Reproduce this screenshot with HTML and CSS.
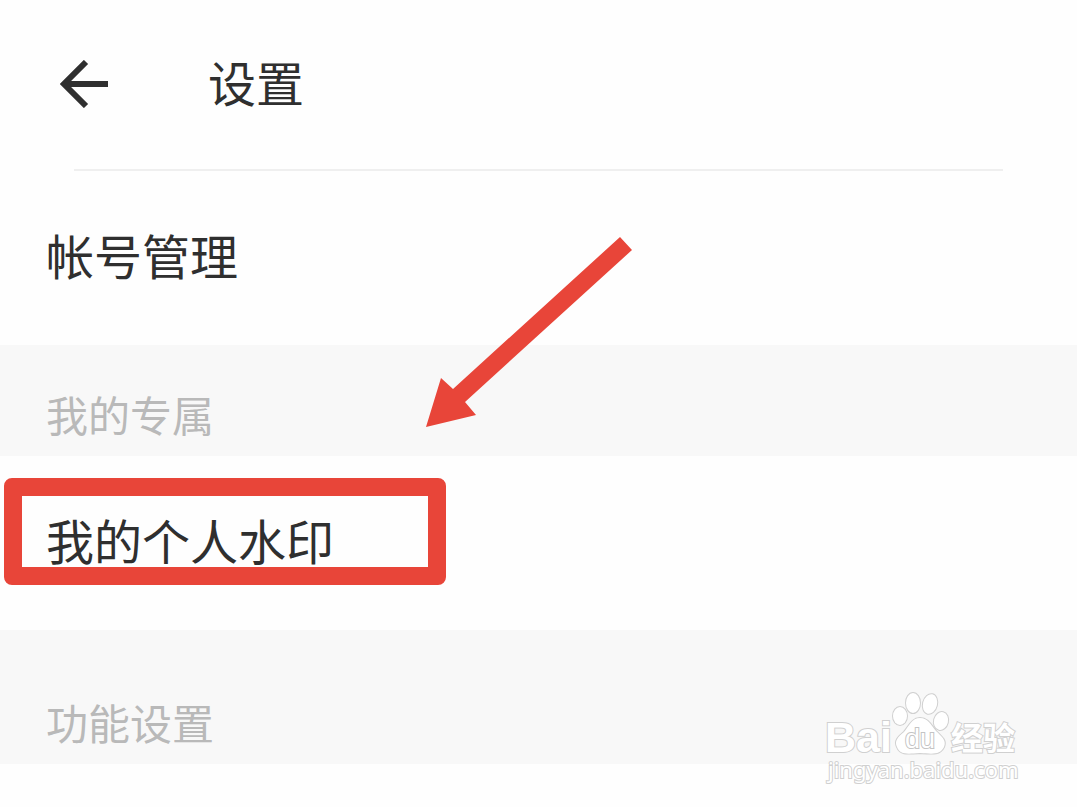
FILE: index.html
```html
<!DOCTYPE html>
<html lang="zh-CN">
<head>
    <meta charset="UTF-8">
    <meta name="viewport" content="width=device-width, initial-scale=1.0">
    <title>设置</title>
    <link rel="stylesheet" href="styles.css">
</head>
<body>
    <div class="page">
        <header class="header">
            <button class="btn-back" type="button" aria-label="返回">
                <svg class="icon-back" viewBox="0 0 48 48" aria-hidden="true">
                    <path d="M48 24H5M26 2L4 24L26 46" fill="none" stroke="#2f2f2f" stroke-width="6"/>
                </svg>
            </button>
            <h1 class="title">设置</h1>
        </header>

        <main class="settings">
            <a class="setting-row" href="#account">帐号管理</a>
            <h2 class="section-title">我的专属</h2>
            <a class="setting-row" href="#watermark">
                <span class="highlight"></span>
                <span class="row-label">我的个人水印</span>
            </a>
            <h2 class="section-title section-title-tall">功能设置</h2>
        </main>

        <!-- Arrow pointing at the highlighted row -->
        <svg class="arrow" viewBox="0 0 206 191" aria-hidden="true">
            <path d="M194 0L206 13L39 165L50 178L0 190L15 141L27 152Z" fill="#e84539"/>
        </svg>

        <!-- Site logo -->
        <svg class="logo" viewBox="0 0 210 110" role="img" aria-label="Baidu 经验">
            <g class="logo-shape">
                <text class="logo-name" x="3" y="60">Bai</text>
                <ellipse cx="78" cy="24" rx="7" ry="9"/>
                <ellipse cx="91" cy="11" rx="7" ry="10"/>
                <ellipse cx="108" cy="12" rx="7" ry="10" transform="rotate(14 108 12)"/>
                <ellipse cx="119" cy="29" rx="7" ry="9" transform="rotate(14 119 29)"/>
                <path d="M98 26C90 26 87 34 82 40C76 45 72 49 75 55C78 63 85 62 98 61C111 62 118 63 122 55C125 48 119 44 114 39C109 33 106 26 98 26Z"/>
                <text class="logo-du" x="83" y="56">du</text>
                <text class="logo-cn" x="129" y="58">经验</text>
                <text class="logo-url" x="6" y="86">jingyan.baidu.com</text>
            </g>
        </svg>
    </div>
</body>
</html>
```

FILE: styles.css
```css
* {
    margin: 0;
    padding: 0;
    box-sizing: border-box;
}

body {
    font-family: "Noto Sans CJK SC", sans-serif;
    color: #2f2f2f;
    background: #fefefe;
}

.page {
    position: relative;
    min-height: 100vh;
    overflow: hidden;
}

.header {
    display: flex;
    align-items: center;
    gap: 100px;
    height: 171px;
    padding: 0 60px 4px;
    background: linear-gradient(#efefef, #efefef) 50% 100% / calc(100% - 148px) 2px no-repeat;
}

.btn-back {
    width: 48px;
    height: 48px;
    border: none;
    background: none;
    cursor: pointer;
}

.icon-back {
    display: block;
    width: 48px;
    height: 48px;
}

.title {
    padding-bottom: 6px;
    font-size: 48px;
    line-height: 72px;
    font-weight: 400;
}

.setting-row {
    position: relative;
    display: flex;
    align-items: center;
    height: 174px;
    padding: 0 46px 8px;
    font-size: 48px;
    line-height: 72px;
    color: inherit;
    text-decoration: none;
}

.row-label {
    position: relative;
}

.highlight {
    position: absolute;
    top: 22px;
    left: 4px;
    width: 442px;
    height: 107px;
    border: 18px solid #e84539;
    border-radius: 8px;
}

.section-title {
    padding: 39px 46px 12px;
    font-size: 42px;
    line-height: 60px;
    font-weight: 400;
    color: #b9b9b9;
    background: #f8f8f8;
}

.section-title-tall {
    padding-top: 62px;
}

.arrow {
    position: absolute;
    top: 237px;
    left: 426px;
    width: 206px;
    height: 191px;
}

.logo {
    position: absolute;
    top: 692px;
    left: 822px;
    width: 210px;
    height: 110px;
    overflow: visible;
}

.logo-shape {
    fill: #fff;
    stroke: #d0d0d0;
    stroke-width: 2px;
    paint-order: stroke;
}

.logo-name {
    font-family: "Liberation Sans", sans-serif;
    font-size: 43px;
    font-weight: 700;
}

.logo-du {
    font-family: "Liberation Sans", sans-serif;
    font-size: 27px;
    stroke: #c4c4c4;
}

.logo-cn {
    font-size: 32px;
    font-weight: 700;
}

.logo-url {
    font-family: "Noto Sans", sans-serif;
    font-size: 22px;
}
```
